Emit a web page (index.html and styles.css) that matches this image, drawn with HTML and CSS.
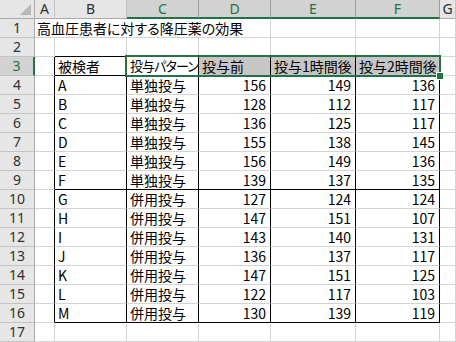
FILE: index.html
```html
<!DOCTYPE html>
<html lang="ja">
<head>
<meta charset="utf-8">
<link rel="stylesheet" href="styles.css">
</head>
<body>
<div class="sheet">
  <div class="grid">
    <div class="corner"><span class="tri"></span></div>
    <div class="ch">A</div><div class="ch">B</div><div class="ch hs">C</div><div class="ch hs">D</div><div class="ch hs">E</div><div class="ch hs">F</div><div class="ch">G</div>

    <div class="rh">1</div><div class="c span4">高血圧患者に対する降圧薬の効果</div><div class="c"></div><div class="c"></div><div class="c"></div>

    <div class="rh">2</div><div class="c"></div><div class="c bb"></div><div class="c bb"></div><div class="c bb"></div><div class="c bb"></div><div class="c bb"></div><div class="c"></div>

    <div class="rh rs">3</div><div class="c br"></div><div class="c br bb">被検者</div><div class="c br bb tight">投与パターン</div><div class="c br bb sel">投与前</div><div class="c br bb sel">投与1時間後</div><div class="c br bb sel">投与2時間後</div><div class="c"></div>

    <div class="rh">4</div><div class="c br"></div><div class="c br">A</div><div class="c br">単独投与</div><div class="c br n">156</div><div class="c br n">149</div><div class="c br n">136</div><div class="c"></div>
    <div class="rh">5</div><div class="c br"></div><div class="c br">B</div><div class="c br">単独投与</div><div class="c br n">128</div><div class="c br n">112</div><div class="c br n">117</div><div class="c"></div>
    <div class="rh">6</div><div class="c br"></div><div class="c br">C</div><div class="c br">単独投与</div><div class="c br n">136</div><div class="c br n">125</div><div class="c br n">117</div><div class="c"></div>
    <div class="rh">7</div><div class="c br"></div><div class="c br">D</div><div class="c br">単独投与</div><div class="c br n">155</div><div class="c br n">138</div><div class="c br n">145</div><div class="c"></div>
    <div class="rh">8</div><div class="c br"></div><div class="c br">E</div><div class="c br">単独投与</div><div class="c br n">156</div><div class="c br n">149</div><div class="c br n">136</div><div class="c"></div>
    <div class="rh">9</div><div class="c br"></div><div class="c br bb">F</div><div class="c br bb">単独投与</div><div class="c br bb n">139</div><div class="c br bb n">137</div><div class="c br bb n">135</div><div class="c"></div>
    <div class="rh">10</div><div class="c br"></div><div class="c br">G</div><div class="c br">併用投与</div><div class="c br n">127</div><div class="c br n">124</div><div class="c br n">124</div><div class="c"></div>
    <div class="rh">11</div><div class="c br"></div><div class="c br">H</div><div class="c br">併用投与</div><div class="c br n">147</div><div class="c br n">151</div><div class="c br n">107</div><div class="c"></div>
    <div class="rh">12</div><div class="c br"></div><div class="c br">I</div><div class="c br">併用投与</div><div class="c br n">143</div><div class="c br n">140</div><div class="c br n">131</div><div class="c"></div>
    <div class="rh">13</div><div class="c br"></div><div class="c br">J</div><div class="c br">併用投与</div><div class="c br n">136</div><div class="c br n">137</div><div class="c br n">117</div><div class="c"></div>
    <div class="rh">14</div><div class="c br"></div><div class="c br">K</div><div class="c br">併用投与</div><div class="c br n">147</div><div class="c br n">151</div><div class="c br n">125</div><div class="c"></div>
    <div class="rh">15</div><div class="c br"></div><div class="c br">L</div><div class="c br">併用投与</div><div class="c br n">122</div><div class="c br n">117</div><div class="c br n">103</div><div class="c"></div>
    <div class="rh">16</div><div class="c br"></div><div class="c br bb">M</div><div class="c br bb">併用投与</div><div class="c br bb n">130</div><div class="c br bb n">139</div><div class="c br bb n">119</div><div class="c"></div>

    <div class="rh">17</div><div class="c"></div><div class="c"></div><div class="c"></div><div class="c"></div><div class="c"></div><div class="c"></div><div class="c"></div>
  </div>
  <div class="selbox"><span class="handle"></span></div>
</div>
</body>
</html>
```

FILE: styles.css
```css
html, body {
  margin: 0;
  padding: 0;
  background: #ffffff;
}
.sheet {
  position: relative;
  width: 456px;
  height: 342px;
  overflow: hidden;
}
.grid {
  display: grid;
  grid-template-columns: 35px 20px 72px 72px 72px 85px 84px 16px;
  grid-auto-rows: 19px;
}
.grid > div {
  box-sizing: border-box;
  white-space: nowrap;
  overflow: visible;
}
.corner {
  position: relative;
  background: #e6e6e6;
  border-right: 1px solid #ababab;
  border-bottom: 1px solid #ababab;
}
.tri {
  position: absolute;
  right: 3px;
  bottom: 3px;
  width: 0;
  height: 0;
  border-left: 11px solid transparent;
  border-bottom: 11px solid #b7b7b7;
}
.ch {
  background: #e6e6e6;
  border-right: 1px solid #c3c3c3;
  border-bottom: 1px solid #ababab;
  text-align: center;
  font-family: "Noto Sans", "Liberation Sans", sans-serif;
  font-size: 14px;
  line-height: 18px;
  color: #303030;
  overflow: hidden;
}
.ch.hs {
  background: #d2d2d2;
  color: #217346;
  border-bottom: 2px solid #217346;
  border-right-color: #9e9e9e;
}
.rh {
  background: #e6e6e6;
  border-right: 1px solid #ababab;
  border-bottom: 1px solid #c3c3c3;
  text-align: center;
  font-family: "Noto Sans", "Liberation Sans", sans-serif;
  font-size: 14px;
  line-height: 18px;
  color: #303030;
}
.rh.rs {
  background: #d2d2d2;
  color: #217346;
  border-right: 2px solid #217346;
}
.c {
  border-right: 1px solid #d4d4d4;
  border-bottom: 1px solid #d4d4d4;
  padding: 0 3px;
  font-family: "Noto Sans CJK JP", sans-serif;
  font-feature-settings: "palt";
  font-size: 14px;
  line-height: 18px;
  color: #000000;
}
.span4 {
  grid-column: span 4;
  padding-left: 2px;
}
.tight {
  font-size: 13px;
  letter-spacing: -0.9px;
  padding-left: 3px;
}
.br {
  border-right-color: #000000;
}
.bb {
  border-bottom-color: #000000;
}
.n {
  text-align: right;
  padding-right: 4px;
}
.sel {
  background: #c6c6c6;
}
.selbox {
  position: absolute;
  left: 125px;
  top: 55px;
  width: 316px;
  height: 22px;
  box-sizing: border-box;
  border: 2px solid #217346;
}
.handle {
  position: absolute;
  right: -5px;
  bottom: -5px;
  width: 6px;
  height: 6px;
  background: #217346;
  border: 1px solid #ffffff;
}
```
